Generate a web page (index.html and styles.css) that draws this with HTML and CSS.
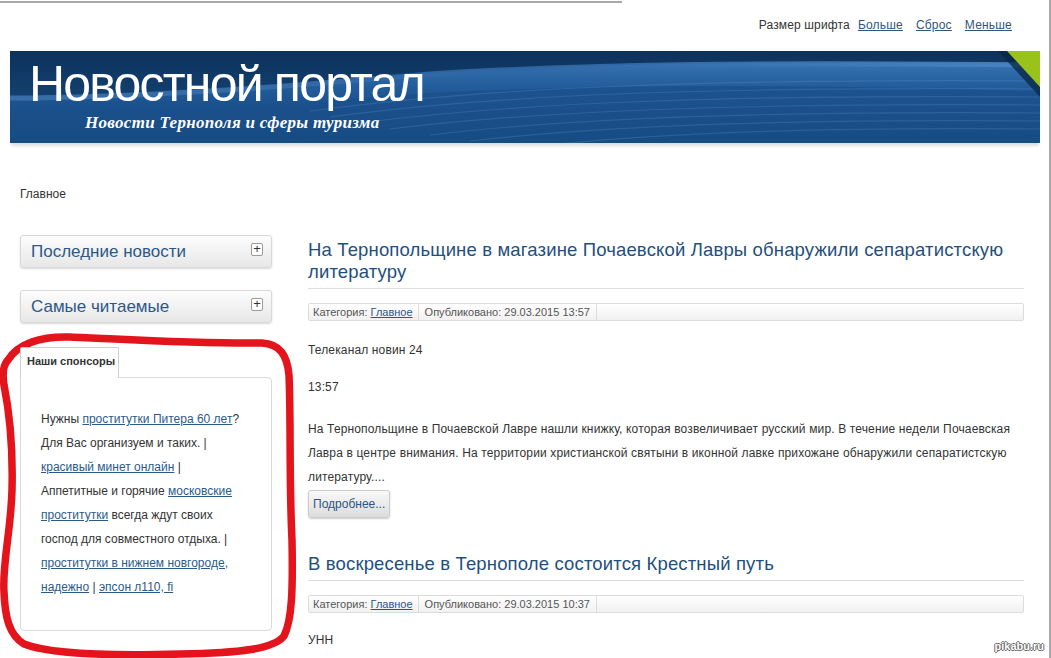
FILE: index.html
```html
<!DOCTYPE html>
<html lang="ru">
<head>
<meta charset="utf-8">
<title>Новостной портал</title>
<link rel="stylesheet" href="styles.css">
</head>
<body>
<div class="screen">
  <div class="topline"></div>
  <div class="page">
    <div class="fontsize">
      <span class="fontsize-label">Размер шрифта</span>
      <a href="#" class="fontsize-link first">Больше</a>
      <a href="#" class="fontsize-link">Сброс</a>
      <a href="#" class="fontsize-link">Меньше</a>
    </div>

    <header class="banner">
      <svg class="banner-art" viewBox="0 0 1030 92" preserveAspectRatio="none" aria-hidden="true">
        <defs>
          <linearGradient id="bgTop" x1="0" y1="0" x2="0" y2="1">
            <stop offset="0" stop-color="#0d325c"/>
            <stop offset="1" stop-color="#13406f"/>
          </linearGradient>
          <linearGradient id="bgBottom" x1="0" y1="0" x2="0" y2="1">
            <stop offset="0" stop-color="#1f5898"/>
            <stop offset="1" stop-color="#174b82"/>
          </linearGradient>
          <linearGradient id="band" x1="0" y1="0" x2="1" y2="0">
            <stop offset="0" stop-color="#3b72ad"/>
            <stop offset="0.5" stop-color="#2f67a4"/>
            <stop offset="1" stop-color="#4a86c2"/>
          </linearGradient>
          <linearGradient id="swath" x1="0" y1="0" x2="0" y2="1">
            <stop offset="0" stop-color="#3a78b8" stop-opacity="0.9"/>
            <stop offset="1" stop-color="#1f5898" stop-opacity="0"/>
          </linearGradient>
        </defs>
        <rect width="1030" height="92" fill="url(#bgBottom)"/>
        <path d="M0,46 C120,46 260,36 420,22 C600,10 820,11 1030,13 V40 C820,34 600,32 420,42 C260,54 120,62 0,60 Z" fill="url(#swath)"/>
        <path d="M0,0 H1030 V13 C820,11 600,10 420,22 C260,36 120,46 0,46 Z" fill="url(#bgTop)"/>
        <path d="M0,47 C120,47 260,37 420,23 C600,11 820,12 1030,14" fill="none" stroke="url(#band)" stroke-width="5" opacity="0.9"/>
        <g fill="none" stroke="#6fa2d8" stroke-width="1.2" opacity="0.22">
          <path d="M300,60 C480,36 700,28 1030,30"/>
          <path d="M320,66 C500,42 720,36 1030,38"/>
          <path d="M350,72 C520,50 740,44 1030,46"/>
          <path d="M380,78 C540,58 760,52 1030,54"/>
          <path d="M420,84 C570,66 780,60 1030,62"/>
          <path d="M460,90 C600,74 800,68 1030,70"/>
          <path d="M520,96 C640,82 820,76 1030,78"/>
        </g>
        <polygon points="988,0 1030,0 1030,46" fill="#0a2747" opacity="0.75"/>
        <polygon points="997,0 1030,0 1030,36" fill="#99c21b"/>
      </svg>
      <h1 class="site-title">Новостной портал</h1>
      <p class="site-slogan">Новости Тернополя и сферы туризма</p>
    </header>

    <div class="breadcrumb">Главное</div>

    <div class="columns">
      <aside class="sidebar">
        <div class="module">
          <span class="module-title">Последние новости</span>
          <span class="module-toggle">+</span>
        </div>
        <div class="module">
          <span class="module-title">Самые читаемые</span>
          <span class="module-toggle">+</span>
        </div>
        <div class="tabs">
          <div class="tab">Наши спонсоры</div>
          <div class="tab-body">
            Нужны <a href="#">проститутки Питера 60 лет</a>? Для Вас организуем и таких. | <a href="#">красивый минет онлайн</a> | Аппетитные и горячие <a href="#">московские проститутки</a> всегда ждут своих господ для совместного отдыха. | <a href="#">проститутки в нижнем новгороде, надежно</a> | <a href="#">эпсон л110, fi</a>
          </div>
        </div>
      </aside>

      <main class="content">
        <article class="article">
          <h2 class="article-title">На Тернопольщине в магазине Почаевской Лавры обнаружили сепаратистскую литературу</h2>
          <div class="article-info">
            <span class="info-item">Категория: <a href="#">Главное</a></span>
            <span class="info-item wide">Опубликовано: 29.03.2015 13:57</span>
          </div>
          <p class="text">Телеканал новин 24</p>
          <p class="text">13:57</p>
          <p class="text teaser">На Тернопольщине в Почаевской Лавре нашли книжку, которая возвеличивает русский мир. В течение недели Почаевская Лавра в центре внимания. На территории христианской святыни в иконной лавке прихожане обнаружили сепаратистскую литературу....</p>
          <a href="#" class="readmore">Подробнее...</a>
        </article>

        <article class="article second">
          <h2 class="article-title">В воскресенье в Тернополе состоится Крестный путь</h2>
          <div class="article-info">
            <span class="info-item">Категория: <a href="#">Главное</a></span>
            <span class="info-item wide">Опубликовано: 29.03.2015 10:37</span>
          </div>
          <p class="text">УНН</p>
        </article>
      </main>
    </div>
  </div>

  <svg class="scribble" viewBox="0 0 300 328" aria-hidden="true">
    <path d="M8,30 C18,14 40,6 70,7 C120,9 200,14 262,13 C280,14 287,25 289,45 C291,90 289,150 292,210 C293,260 292,290 284,306 C274,319 240,323 180,324 C110,326 50,324 24,314 C9,305 5,287 4,262 C2,235 11,200 12,160 C13,120 9,80 4,55 C2,42 4,34 8,30 Z" fill="none" stroke="#e3141c" stroke-width="7.5" stroke-linecap="round" stroke-linejoin="round"/>
  </svg>

  <div class="watermark">pikabu.ru</div>
</div>
</body>
</html>
```

FILE: styles.css
```css
* {
  box-sizing: border-box;
}

html,
body {
  margin: 0;
  padding: 0;
  background: #fff;
}

body {
  font-family: "Liberation Sans", Arial, sans-serif;
  font-size: 12px;
  color: #333;
}

a {
  color: #2b5685;
}

.screen {
  position: relative;
  width: 1051px;
  height: 658px;
  overflow: hidden;
  border-right: 2px solid #a9a9a9;
}

.topline {
  width: 622px;
  height: 2px;
  margin-top: 1px;
  background: #a8a8a8;
}

.page {
  width: 1030px;
  margin-left: 10px;
}

/* font size switcher */
.fontsize {
  display: flex;
  justify-content: flex-end;
  align-items: center;
  height: 16px;
  line-height: 16px;
  margin-top: 14px;
  padding-right: 28px;
  color: #333;
}

.fontsize-label {
  letter-spacing: 0.15px;
}

.fontsize-link {
  margin-left: 13px;
  color: #2f5680;
  letter-spacing: 0.2px;
}

.fontsize-link.first {
  margin-left: 8px;
}

/* banner */
.banner {
  position: relative;
  height: 92px;
  margin-top: 18px;
  overflow: hidden;
  box-shadow: 0 4px 3px -1px rgba(0, 0, 0, 0.13);
}

.banner-art {
  position: absolute;
  left: 0;
  top: 0;
  width: 100%;
  height: 100%;
  display: block;
}

.site-title {
  position: relative;
  margin: 0;
  padding: 8px 0 0 19px;
  font-family: "Liberation Sans", Arial, sans-serif;
  font-weight: normal;
  font-size: 50px;
  line-height: 50px;
  letter-spacing: -1.8px;
  color: #fff;
}

.site-slogan {
  position: relative;
  margin: 4px 0 0;
  padding-left: 75px;
  font-family: "Liberation Serif", "Times New Roman", serif;
  font-style: italic;
  font-weight: bold;
  font-size: 17px;
  line-height: 20px;
  letter-spacing: 0.3px;
  color: #fff;
}

/* breadcrumb */
.breadcrumb {
  margin-top: 43px;
  padding-left: 10px;
  line-height: 16px;
  color: #333;
}

/* columns */
.columns {
  display: flex;
  gap: 36px;
  margin-top: 33px;
  padding-left: 10px;
}

.sidebar {
  width: 252px;
  flex: none;
  display: flex;
  flex-direction: column;
  gap: 22px;
}

.module {
  display: flex;
  justify-content: space-between;
  align-items: center;
  height: 33px;
  padding: 0 8px 0 10px;
  border: 1px solid #d9d9d9;
  border-radius: 3px;
  background: linear-gradient(#fdfdfd, #e7e7e7);
  box-shadow: 0 1px 2px rgba(0, 0, 0, 0.15);
}

.module-title {
  font-size: 17px;
  color: #2c5888;
}

.module-toggle {
  align-self: flex-start;
  margin-top: 7px;
  width: 12px;
  height: 13px;
  border: 1px solid #9a9a9a;
  border-radius: 2px;
  background: #fff;
  font-size: 13px;
  line-height: 10px;
  text-align: center;
  color: #333;
}

.tabs {
  margin-top: 2px;
}

.tab {
  position: relative;
  z-index: 1;
  width: 99px;
  height: 31px;
  margin-bottom: -1px;
  padding: 5px 0 0 6px;
  border: 1px solid #cfcfcf;
  border-bottom: none;
  border-radius: 2px 2px 0 0;
  background: #fff;
  font-size: 11px;
  font-weight: bold;
  line-height: 16px;
  color: #333;
}

.tab-body {
  height: 254px;
  padding: 29px 20px 0 20px;
  border: 1px solid #dadada;
  border-radius: 0 4px 4px 4px;
  line-height: 24px;
  color: #333;
}

.tab-body a {
  color: #2b5a8a;
}

/* main content */
.content {
  width: 716px;
  flex: none;
}

.article-title {
  margin: 4px 0 0;
  padding-bottom: 5px;
  border-bottom: 1px solid #dedede;
  font-size: 18.5px;
  font-weight: normal;
  line-height: 22px;
  letter-spacing: 0.15px;
  color: #1f4f7e;
}

.article-info {
  display: flex;
  height: 18px;
  margin-top: 14px;
  margin-bottom: 17px;
  border: 1px solid #dcdcdc;
  border-radius: 2px;
  background: linear-gradient(#ffffff, #f1f1f1);
  font-size: 11px;
  line-height: 16px;
  color: #555;
}

.info-item {
  padding: 0 5px 0 4px;
  border-right: 1px solid #dcdcdc;
}

.info-item.wide {
  padding: 0 6px 0 6px;
}

.info-item a {
  color: #2b5685;
}

.text {
  margin: 0 0 13px;
  line-height: 24px;
  letter-spacing: 0.14px;
}

.text.teaser {
  margin-top: 18px;
  margin-bottom: 1px;
}

.readmore {
  display: inline-block;
  height: 28px;
  padding: 0 4px;
  border: 1px solid #cdcdcd;
  border-radius: 3px;
  background: linear-gradient(#f9f9f9, #dcdcdc);
  box-shadow: 0 1px 2px rgba(0, 0, 0, 0.2);
  line-height: 26px;
  color: #2b5685;
  text-decoration: none;
}

.article.second .article-title {
  margin-top: 35px;
}

.article.second .article-info {
  margin-bottom: 15px;
}

/* overlays */
.scribble {
  position: absolute;
  left: 0;
  top: 330px;
  width: 300px;
  height: 328px;
  pointer-events: none;
}

.watermark {
  position: absolute;
  right: 5px;
  bottom: 6px;
  font-size: 11px;
  font-weight: bold;
  color: #fff;
  text-shadow: -1px 0 #666, 1px 0 #666, 0 -1px #666, 0 1px #666;
}
```
